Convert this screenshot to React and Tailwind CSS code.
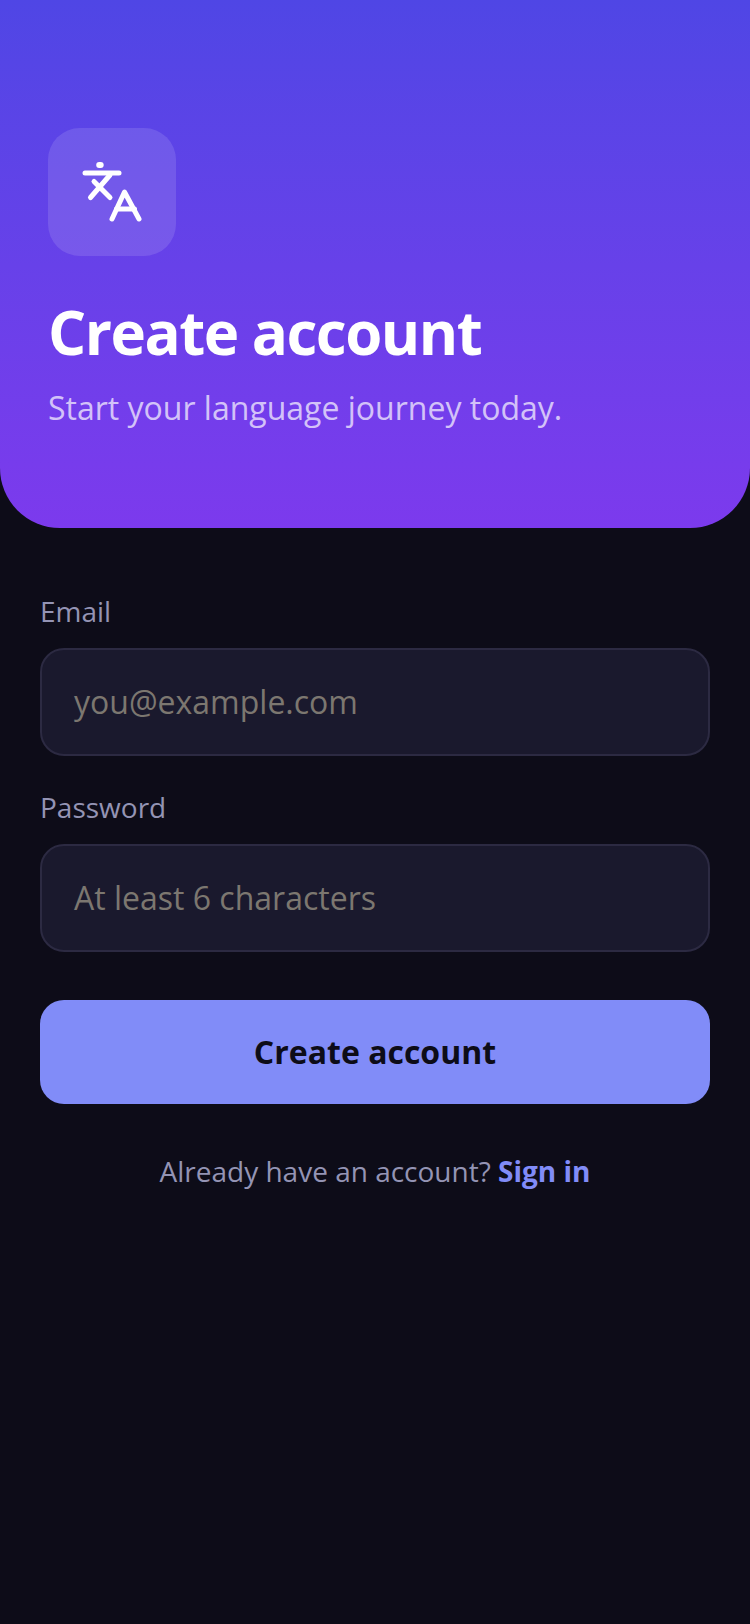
export default function App() {
  return (
    <div className="min-h-[1624px] bg-[#0d0c18] flex flex-col" style={{ fontFamily: '"Open Sans", sans-serif' }}>
      <header className="h-[528px] rounded-b-[60px] bg-gradient-to-b from-[#4f46e5] to-[#7c3aed] pl-12 pt-32 flex flex-col">
        <div className="w-32 h-32 rounded-[32px] bg-white/[0.12] flex items-center justify-center">
          <svg width="128" height="128" viewBox="48 128 128 128" fill="none" stroke="white" strokeWidth="5" strokeLinecap="round" strokeLinejoin="round">
            <path d="M99.200 165h1.500" strokeWidth="6" />
            <path d="M85 173h34" />
            <path d="M110 175L90.500 197.500" />
            <path d="M94 181.500L110 197.500" />
            <path d="M112 219L124.500 192L139 219" />
            <path d="M116.500 209H134.500" />
          </svg>
        </div>
        <h1 className="mt-[35px] text-[60px] leading-[82px] font-bold text-white tracking-[-1.500px]">Create account</h1>
        <p className="mt-[13px] text-[32px] leading-[44px] text-white/70">Start your language journey today.</p>
      </header>
      <main className="px-10 pt-[64px] flex flex-col">
        <label className="text-[28px] leading-[38px] text-[#9494b4]">Email</label>
        <div className="mt-[18px] h-[108px] rounded-[24px] border-2 border-[#2c2a42] bg-[#1a192d] px-8 flex items-center text-[32px] text-[#7c7770]">you@example.com</div>
        <label className="mt-[32px] text-[28px] leading-[38px] text-[#9494b4]">Password</label>
        <div className="mt-[18px] h-[108px] rounded-[24px] border-2 border-[#2c2a42] bg-[#1a192d] px-8 flex items-center text-[32px] text-[#7c7770]">At least 6 characters</div>
        <button className="mt-[48px] h-[104px] rounded-[24px] bg-[#818cf8] text-[32px] font-bold text-[#0d0c18]">Create account</button>
        <p className="mt-[48px] text-center text-[28px] leading-[38px] text-[#9494b4]">Already have an account? <span className="font-bold text-[#818cf8]">Sign in</span></p>
      </main>
    </div>
  );
}
